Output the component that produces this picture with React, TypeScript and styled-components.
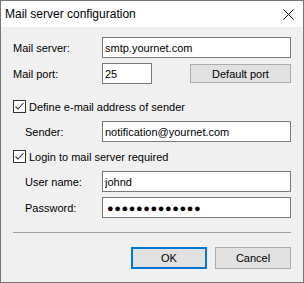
import React from "react";
import styled, { createGlobalStyle } from "styled-components";

const GlobalStyle = createGlobalStyle`
  html, body { margin: 0; padding: 0; background: #ffffff; }
  * { box-sizing: border-box; }
`;

const FONT = `"Liberation Sans", Arial, sans-serif`;

const Window = styled.div`
  width: 304px;
  height: 283px;
  border: 1px solid #777777;
  display: flex;
  flex-direction: column;
  font-family: ${FONT};
  font-size: 11px;
  color: #000;
`;

const TitleBar = styled.div`
  height: 26px;
  background: #ffffff;
  display: flex;
  align-items: center;
  justify-content: space-between;
  padding-left: 4px;
  padding-right: 9px;
  font-size: 12px;
`;

const Body = styled.div`
  flex: 1;
  background: #f0f0f0;
  padding: 10px 12px 0 12px;
  display: flex;
  flex-direction: column;
`;

const Row = styled.div<{ $mt?: number; $indent?: number }>`
  display: flex;
  align-items: center;
  margin-top: ${(p) => p.$mt ?? 0}px;
  padding-left: ${(p) => p.$indent ?? 0}px;
`;

const Label = styled.span<{ $w: number }>`
  width: ${(p) => p.$w}px;
  flex: none;
`;

const TextBox = styled.input<{ $w?: number; $secret?: boolean }>`
  height: 21px;
  width: ${(p) => (p.$w ? `${p.$w}px` : "auto")};
  flex: ${(p) => (p.$w ? "none" : "1")};
  min-width: 0;
  border: 1px solid #7a7a7a;
  background: #ffffff;
  padding: 0 ${(p) => (p.$secret ? 4 : 2)}px;
  margin: 0;
  font-family: ${FONT};
  font-size: 11px;
  letter-spacing: ${(p) => (p.$secret ? "0.6px" : "0")};
  color: #000;
  outline: none;
`;

const Button = styled.button<{ $default?: boolean; $w: number; $h: number }>`
  width: ${(p) => p.$w}px;
  height: ${(p) => p.$h}px;
  background: #e1e1e1;
  border: ${(p) => (p.$default ? "2px solid #0078d7" : "1px solid #adadad")};
  font-family: ${FONT};
  font-size: 11px;
  color: #000;
  padding: 0;
  margin: 0;
`;

const PortButton = styled(Button)`
  margin-left: auto;
`;

const CheckRow = styled.label<{ $mt: number }>`
  display: flex;
  align-items: center;
  height: 13px;
  margin-top: ${(p) => p.$mt}px;
  gap: 3px;
`;

const Box = styled.span`
  width: 13px;
  height: 13px;
  border: 1px solid #333333;
  background: #ffffff;
  display: flex;
  align-items: center;
  justify-content: center;
  flex: none;
`;

const Separator = styled.div`
  height: 1px;
  background: #a0a0a0;
  margin-top: 14px;
`;

const ButtonBar = styled.div`
  display: flex;
  justify-content: flex-end;
  gap: 8px;
  margin-top: 14px;
`;

const Check = ({ label, mt }: { label: string; mt: number }) => (
  <CheckRow $mt={mt}>
    <Box>
      <svg width="11" height="11" viewBox="0 0 11 11">
        <polyline points="1.5,5.5 4,8 9.5,2" fill="none" stroke="#333" strokeWidth="1.1" />
      </svg>
    </Box>
    <span>{label}</span>
  </CheckRow>
);

export default function App() {
  return (
    <>
      <GlobalStyle />
      <Window>
        <TitleBar>
          <span>Mail server configuration</span>
          <svg width="11" height="11" viewBox="0 0 11 11">
            <path d="M0.5 0.5 L10.5 10.5 M10.5 0.5 L0.5 10.5" stroke="#000" strokeWidth="1" />
          </svg>
        </TitleBar>
        <Body>
          <Row>
            <Label $w={89}>Mail server:</Label>
            <TextBox readOnly value="smtp.yournet.com" />
          </Row>
          <Row $mt={5}>
            <Label $w={89}>Mail port:</Label>
            <TextBox readOnly value="25" $w={50} />
            <PortButton $w={101} $h={19}>Default port</PortButton>
          </Row>
          <Check label="Define e-mail address of sender" mt={16} />
          <Row $mt={8} $indent={12}>
            <Label $w={77}>Sender:</Label>
            <TextBox readOnly value="notification@yournet.com" />
          </Row>
          <Check label="Login to mail server required" mt={8} />
          <Row $mt={8} $indent={12}>
            <Label $w={77}>User name:</Label>
            <TextBox readOnly value="johnd" />
          </Row>
          <Row $mt={5} $indent={12}>
            <Label $w={77}>Password:</Label>
            <TextBox readOnly value="●●●●●●●●●●●●●" $secret />
          </Row>
          <Separator />
          <ButtonBar>
            <Button $default $w={76} $h={22}>OK</Button>
            <Button $w={76} $h={22}>Cancel</Button>
          </ButtonBar>
        </Body>
      </Window>
    </>
  );
}
